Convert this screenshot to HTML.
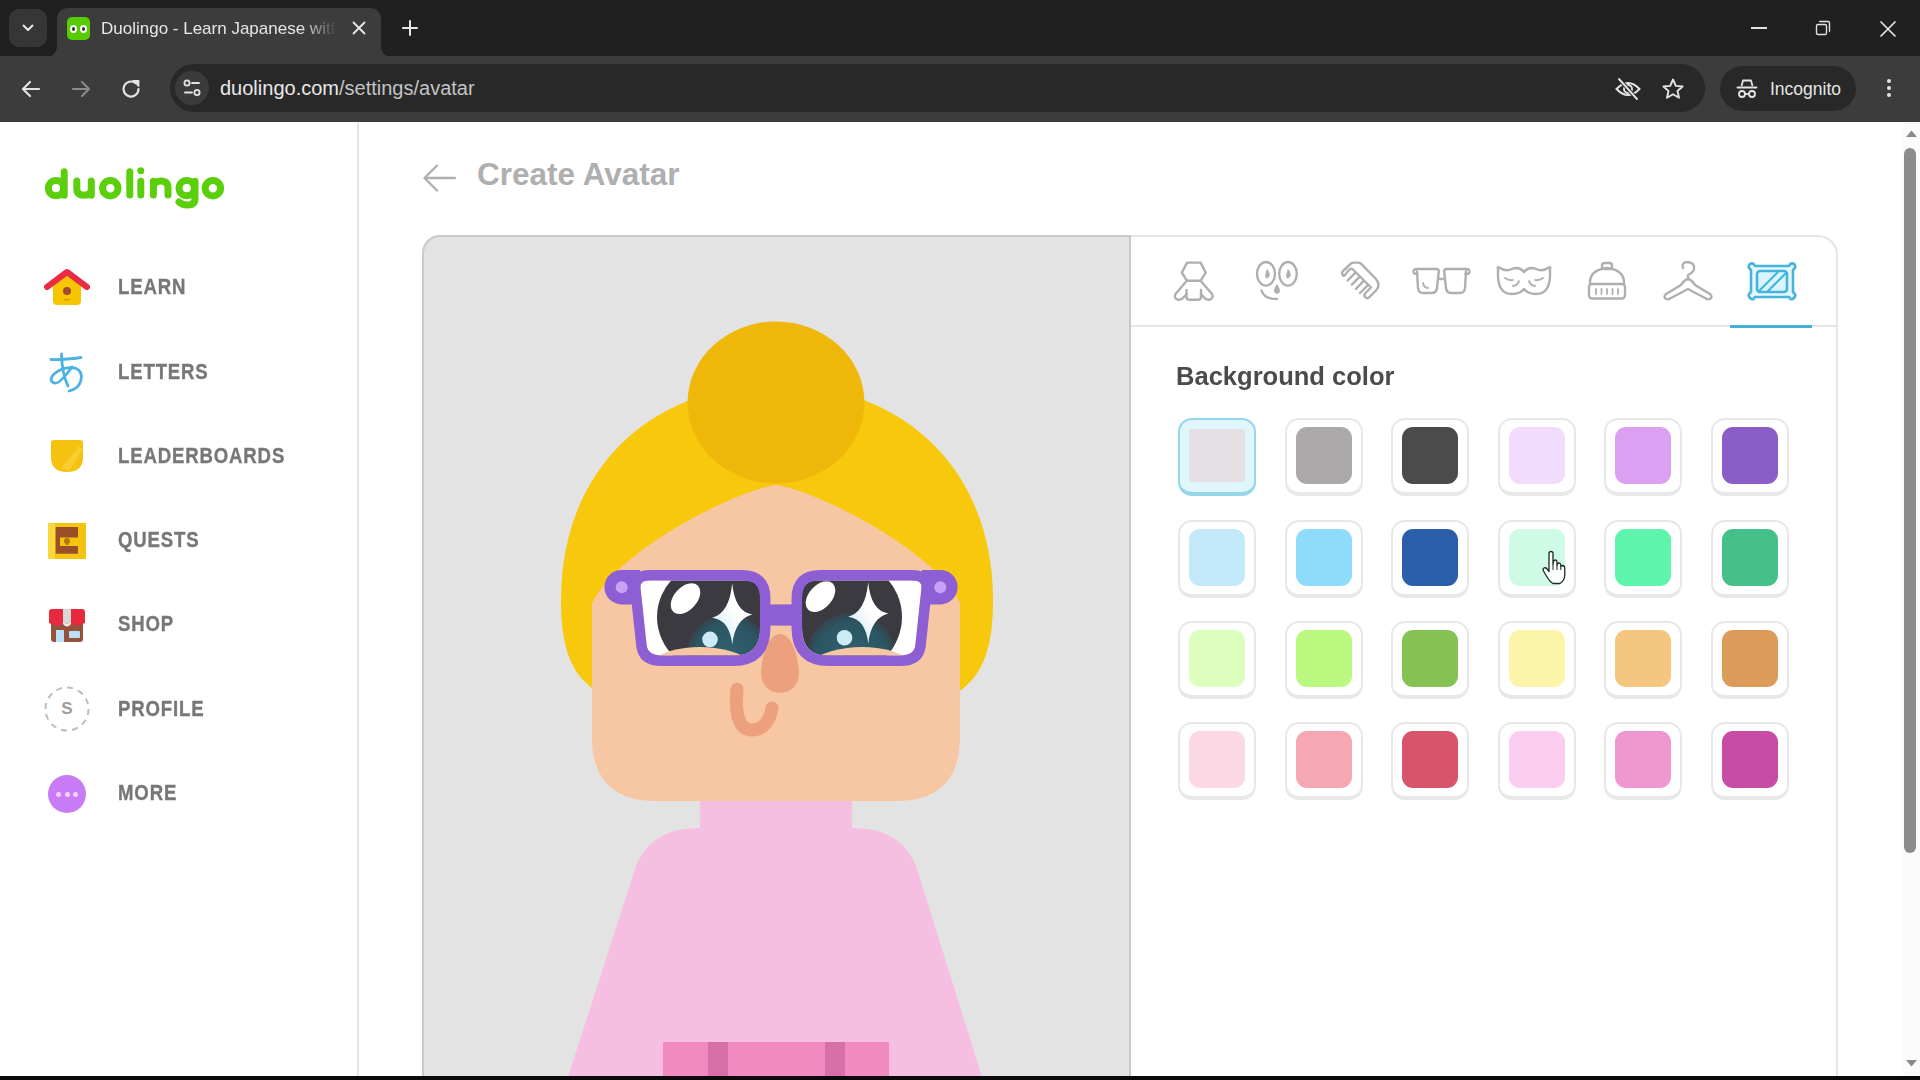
<!DOCTYPE html>
<html><head><meta charset="utf-8">
<style>
*{margin:0;padding:0;box-sizing:border-box}
html,body{width:1920px;height:1080px;overflow:hidden;background:#fff;font-family:"Liberation Sans",sans-serif;position:relative}
.abs{position:absolute}
.nav{position:absolute;left:118px;font-weight:700;font-size:22px;line-height:24px;color:#777;letter-spacing:1px;transform-origin:0 0;transform:scaleX(0.845);white-space:nowrap;-webkit-text-stroke:0.35px #777}
</style></head><body>
<!-- ===== Browser chrome ===== -->
<div class="abs" style="left:0;top:0;width:1920px;height:56px;background:#202020"></div>
<!-- tab dropdown btn -->
<div class="abs" style="left:9px;top:9px;width:38px;height:38px;background:#363636;border-radius:10px"></div>
<svg class="abs" style="left:20px;top:20px" width="16" height="16" viewBox="0 0 16 16"><path d="M3.5 5.5 L8 10 L12.5 5.5" fill="none" stroke="#e8e8e8" stroke-width="2" stroke-linecap="round" stroke-linejoin="round"/></svg>
<!-- active tab -->
<svg class="abs" style="left:45px;top:8px" width="348" height="49" viewBox="0 0 348 49"><path d="M0 49 Q12 49 12 37 L12 12 Q12 0 24 0 L324 0 Q336 0 336 12 L336 37 Q336 49 348 49 Z" fill="#3c3c3c"/></svg>
<!-- favicon -->
<div class="abs" style="left:67px;top:17px;width:23px;height:23px;background:#58cc02;border-radius:5px"></div>
<div class="abs" style="left:70px;top:25px;width:7px;height:8px;background:#fff;border-radius:50%"></div>
<div class="abs" style="left:80px;top:25px;width:7px;height:8px;background:#fff;border-radius:50%"></div>
<div class="abs" style="left:72px;top:27px;width:3px;height:4px;background:#2b3a1a;border-radius:50%"></div>
<div class="abs" style="left:82px;top:27px;width:3px;height:4px;background:#333;border-radius:50%"></div>
<div class="abs" style="left:101px;top:18px;width:236px;height:24px;overflow:hidden;white-space:nowrap;font-size:17px;color:#e6e6e6;line-height:22px;-webkit-mask-image:linear-gradient(90deg,#000 85%,transparent 100%)">Duolingo - Learn Japanese with</div>
<svg class="abs" style="left:351px;top:20px" width="16" height="16" viewBox="0 0 16 16"><path d="M2.5 2.5 L13.5 13.5 M13.5 2.5 L2.5 13.5" stroke="#e8e8e8" stroke-width="1.8" stroke-linecap="round"/></svg>
<svg class="abs" style="left:401px;top:19px" width="18" height="18" viewBox="0 0 18 18"><path d="M9 2 V16 M2 9 H16" stroke="#e8e8e8" stroke-width="2" stroke-linecap="round"/></svg>
<!-- window controls -->
<div class="abs" style="left:1751px;top:27px;width:16px;height:1.5px;background:#e0e0e0"></div>
<svg class="abs" style="left:1813px;top:18px" width="20" height="20" viewBox="0 0 20 20"><rect x="3.5" y="6.5" width="10" height="10" rx="1.5" fill="none" stroke="#e0e0e0" stroke-width="1.4"/><path d="M6.5 4 Q6.5 3.5 7 3.5 L15 3.5 Q16.5 3.5 16.5 5 L16.5 13 Q16.5 13.5 16 13.5" fill="none" stroke="#e0e0e0" stroke-width="1.4"/></svg>
<svg class="abs" style="left:1878px;top:19px" width="20" height="20" viewBox="0 0 20 20"><path d="M2.5 2.5 L17.5 17.5 M17.5 2.5 L2.5 17.5" stroke="#e8e8e8" stroke-width="1.6"/></svg>
<!-- toolbar -->
<div class="abs" style="left:0;top:56px;width:1920px;height:66px;background:#3c3c3c"></div>
<svg class="abs" style="left:19px;top:77px" width="24" height="24" viewBox="0 0 24 24"><path d="M20 12 H4.5 M11 5 L4 12 L11 19" fill="none" stroke="#e3e3e3" stroke-width="2.2" stroke-linecap="round" stroke-linejoin="round"/></svg>
<svg class="abs" style="left:69px;top:77px" width="24" height="24" viewBox="0 0 24 24"><path d="M4 12 H19.5 M13 5 L20 12 L13 19" fill="none" stroke="#8a8a8a" stroke-width="2.2" stroke-linecap="round" stroke-linejoin="round"/></svg>
<svg class="abs" style="left:119px;top:77px" width="24" height="24" viewBox="0 0 24 24"><path d="M19.5 12 A7.5 7.5 0 1 1 16.6 6.1" fill="none" stroke="#e3e3e3" stroke-width="2.2" stroke-linecap="round"/><path d="M14 3.5 L19.8 3.5 L19.8 9.3 Z" fill="#e3e3e3" stroke="#e3e3e3" stroke-width="1.2" stroke-linejoin="round"/></svg>
<div class="abs" style="left:170px;top:64px;width:1535px;height:48px;background:#282828;border-radius:24px"></div>
<div class="abs" style="left:175px;top:71px;width:34px;height:34px;background:#3b3b3b;border-radius:50%"></div>
<svg class="abs" style="left:181px;top:77px" width="22" height="22" viewBox="0 0 22 22"><circle cx="6" cy="6" r="2.6" fill="none" stroke="#e3e3e3" stroke-width="1.8"/><path d="M11 6 H18" stroke="#e3e3e3" stroke-width="1.8" stroke-linecap="round"/><circle cx="16" cy="15.5" r="2.6" fill="none" stroke="#e3e3e3" stroke-width="1.8"/><path d="M4 15.5 H11" stroke="#e3e3e3" stroke-width="1.8" stroke-linecap="round"/></svg>
<div class="abs" style="left:220px;top:76px;font-size:20px;line-height:24px;color:#e8e8e8;white-space:nowrap">duolingo.com<span style="color:#c4c4c4">/settings/avatar</span></div>
<svg class="abs" style="left:1614px;top:76px" width="28" height="26" viewBox="0 0 28 26"><path d="M2.5 13 Q14 1 25.5 13 Q14 25 2.5 13 Z" fill="none" stroke="#e3e3e3" stroke-width="1.9"/><circle cx="14" cy="13" r="4" fill="none" stroke="#e3e3e3" stroke-width="1.9"/><path d="M5 3 L23 23" stroke="#282828" stroke-width="4"/><path d="M5 3 L23 23" stroke="#e3e3e3" stroke-width="1.9" stroke-linecap="round"/></svg>
<svg class="abs" style="left:1661px;top:77px" width="24" height="24" viewBox="0 0 24 24"><path d="M12 2.5 L14.8 8.9 L21.6 9.5 L16.5 14 L18 20.8 L12 17.2 L6 20.8 L7.5 14 L2.4 9.5 L9.2 8.9 Z" fill="none" stroke="#e3e3e3" stroke-width="1.9" stroke-linejoin="round"/></svg>
<div class="abs" style="left:1720px;top:66px;width:136px;height:45px;background:#282828;border-radius:23px"></div>
<svg class="abs" style="left:1736px;top:78px" width="22" height="22" viewBox="0 0 22 22"><path d="M5.5 8 L7 2.5 L15 2.5 L16.5 8" fill="none" stroke="#e3e3e3" stroke-width="1.8" stroke-linejoin="round"/><path d="M1.5 9.5 H20.5" stroke="#e3e3e3" stroke-width="2" stroke-linecap="round"/><circle cx="6" cy="16" r="3" fill="none" stroke="#e3e3e3" stroke-width="1.8"/><circle cx="16" cy="16" r="3" fill="none" stroke="#e3e3e3" stroke-width="1.8"/><path d="M9 16 H13" stroke="#e3e3e3" stroke-width="1.8"/></svg>
<div class="abs" style="left:1770px;top:78px;font-size:17.5px;line-height:22px;color:#e6e6e6;white-space:nowrap">Incognito</div>
<div class="abs" style="left:1887px;top:79px;width:4px;height:4px;background:#e3e3e3;border-radius:50%"></div>
<div class="abs" style="left:1887px;top:86px;width:4px;height:4px;background:#e3e3e3;border-radius:50%"></div>
<div class="abs" style="left:1887px;top:93px;width:4px;height:4px;background:#e3e3e3;border-radius:50%"></div>

<!-- ===== Sidebar ===== -->
<div class="abs" style="left:357px;top:122px;width:2px;height:958px;background:#e5e5e5"></div>
<svg class="abs" style="left:35px;top:155px" width="200" height="65" viewBox="35 155 200 65" fill="none" stroke="#5ccf0c" stroke-width="7" stroke-linecap="round" stroke-linejoin="round">
  <circle cx="56" cy="188.2" r="7.6"/><path d="M64.2 171.8 L64.2 195.2"/>
  <path d="M76.8 181 L76.8 189 Q76.8 195.3 84 195.3 Q91.3 195.3 91.3 189 L91.3 181 M91.3 186 L91.3 195.2"/>
  <circle cx="110.3" cy="188.2" r="7.7"/>
  <path d="M129.8 171.8 L129.8 195"/>
  <path d="M140.8 181.2 L140.8 195"/><circle cx="140.8" cy="170.8" r="3.5" fill="#5ccf0c" stroke="none"/>
  <path d="M153.4 195 L153.4 181.2 M153.4 187.5 Q153.4 181 160.6 181 Q168 181 168 187.5 L168 195"/>
  <circle cx="186.7" cy="188.2" r="7.6"/><path d="M195 181.2 L195 198.5 Q195 205 187.5 205 Q182 205 179 202"/>
  <circle cx="212.9" cy="188.2" r="7.7"/>
</svg>
<!-- learn house -->
<svg class="abs" style="left:44px;top:268px" width="46" height="40" viewBox="0 0 46 40"><path d="M9 18 L23 7 L37 18 L37 33 Q37 37 33 37 L13 37 Q9 37 9 33 Z" fill="#f8c600"/><path d="M3 19 L23 4 L43 19" fill="none" stroke="#ea2b44" stroke-width="6" stroke-linecap="round" stroke-linejoin="round"/><circle cx="23" cy="23" r="4" fill="#a5492b"/><rect x="20" y="31" width="6" height="1.6" rx="0.8" fill="#d4a000"/></svg>
<div class="nav" style="top:275px">LEARN</div>
<!-- letters あ -->
<svg class="abs" style="left:46px;top:352px" width="40" height="44" viewBox="0 0 40 44"><path d="M5 7.5 Q18 8 35 5.5" fill="none" stroke="#4ab3e3" stroke-width="2.8" stroke-linecap="round"/><path d="M15.5 2 Q16 22 22 34" fill="none" stroke="#4ab3e3" stroke-width="2.8" stroke-linecap="round"/><path d="M26 15 Q13 33 8 31 Q2 28 8 22 Q17 14 29 16 Q37 19 35 28 Q33 37 23 39" fill="none" stroke="#4ab3e3" stroke-width="2.8" stroke-linecap="round" stroke-linejoin="round"/></svg>
<div class="nav" style="top:360px">LETTERS</div>
<!-- leaderboard shield -->
<svg class="abs" style="left:49px;top:438px" width="36" height="36" viewBox="0 0 36 36"><path d="M2 5 Q2 2 5 2 L31 2 Q34 2 34 5 L34 19 Q34 34 18 34 Q2 34 2 19 Z" fill="#f5c20f"/><path d="M12 30 L30 8 L33 12 L20 33 Z" fill="#fad84a" opacity="0.55"/></svg>
<div class="nav" style="top:444px">LEADERBOARDS</div>
<!-- quests chest -->
<svg class="abs" style="left:47px;top:521px" width="40" height="40" viewBox="0 0 40 40"><rect x="1" y="2" width="38" height="36" fill="#f5c60f"/><rect x="1" y="2" width="7" height="36" fill="#f9d83e"/><rect x="32" y="2" width="7" height="36" fill="#f3c20a"/><path d="M8.6 6 L31 6 L31 16.5 L13 16.5 L13 25 L31 25 L31 32.8 L8.6 32.8 Z" fill="#9b4f28"/><circle cx="20" cy="20" r="3" fill="#b4760a"/><rect x="18.7" y="20" width="2.6" height="4" fill="#b4760a"/></svg>
<div class="nav" style="top:528px">QUESTS</div>
<!-- shop -->
<svg class="abs" style="left:47px;top:607px" width="40" height="38" viewBox="0 0 40 38"><path d="M4 14 L36 14 L36 32 Q36 35 33 35 L7 35 Q4 35 4 32 Z" fill="#94523f"/><rect x="9" y="23" width="8" height="12" fill="#b9e0f7"/><rect x="22" y="24" width="11" height="7" rx="1" fill="#b9e0f7"/><path d="M2 5 Q2 2 5 2 L16 2 L16 17 Q9 20 2 16 Z" fill="#e8283d"/><path d="M24 2 L35 2 Q38 2 38 5 L38 16 Q31 20 24 17 Z" fill="#e8283d"/><path d="M16 2 L24 2 L24 14 Q20 20 16 14 Z" fill="#d9d9d9"/><path d="M16 14 Q20 20 24 14 L24 17 Q20 22 16 17 Z" fill="#f5efe8"/></svg>
<div class="nav" style="top:612px">SHOP</div>
<!-- profile -->
<svg class="abs" style="left:44px;top:686px" width="46" height="46" viewBox="0 0 46 46"><circle cx="23" cy="23" r="21.5" fill="none" stroke="#bdbdbd" stroke-width="2" stroke-dasharray="6 5.2"/></svg>
<div class="abs" style="left:44px;top:698px;width:46px;text-align:center;font-size:17px;line-height:22px;color:#9c9c9c;font-weight:700">S</div>
<div class="nav" style="top:697px">PROFILE</div>
<!-- more -->
<div class="abs" style="left:48px;top:775px;width:38px;height:38px;background:#c97bf5;border-radius:50%"></div>
<div class="abs" style="left:56px;top:792px;width:5px;height:5px;background:#f5d0ff;border-radius:50%"></div>
<div class="abs" style="left:64.5px;top:792px;width:5px;height:5px;background:#f5d0ff;border-radius:50%"></div>
<div class="abs" style="left:73px;top:792px;width:5px;height:5px;background:#f5d0ff;border-radius:50%"></div>
<div class="nav" style="top:781px">MORE</div>

<!-- ===== Header ===== -->
<svg class="abs" style="left:420px;top:160px" width="40" height="36" viewBox="0 0 40 36"><path d="M35 18 H5.5 M17 5.5 L4.5 18 L17 30.5" fill="none" stroke="#afafaf" stroke-width="2.3" stroke-linecap="round" stroke-linejoin="round"/></svg>
<div class="abs" style="left:477px;top:155px;font-size:31.5px;line-height:38px;font-weight:700;color:#afafaf;white-space:nowrap">Create Avatar</div>
<!-- ===== Card ===== -->
<div class="abs" style="left:1129px;top:235px;width:709px;height:860px;border:2px solid #e5e5e5;border-bottom:none;border-radius:0 20px 0 0;background:#fff"></div>
<div class="abs" style="left:1130px;top:325px;width:706px;height:2px;background:#e5e5e5"></div>
<div class="abs" style="left:1730px;top:325px;width:82px;height:3px;background:#45afd9"></div>
<div class="abs" style="left:422px;top:235px;width:709px;height:860px;border:2px solid #c9c9c9;border-bottom:none;border-radius:18px 0 0 0;background:#e3e3e3"></div>
<!-- avatar -->
<svg class="abs" style="left:424px;top:237px" width="706" height="840" viewBox="424 237 706 840">
  <defs>
    <radialGradient id="teal" cx="0.5" cy="0.5" r="0.5">
      <stop offset="0" stop-color="#2f6170"/>
      <stop offset="0.8" stop-color="#2c5563"/>
      <stop offset="1" stop-color="#34434c"/>
    </radialGradient>
    <linearGradient id="spark" x1="0" y1="1" x2="1" y2="0">
      <stop offset="0" stop-color="#c6e6f3"/>
      <stop offset="0.55" stop-color="#ffffff"/>
    </linearGradient>
    <clipPath id="lensL"><path d="M650 580.5 L745 580.5 Q760 580.5 760 595 L760 628 Q760 655.6 733 655.6 L662 655.6 Q648 655.6 646.5 645 L640.5 588 Q640 580.5 650 580.5 Z"/></clipPath>
    <clipPath id="lensR"><path d="M912 580.5 L817 580.5 Q802 580.5 802 595 L802 628 Q802 655.6 829 655.6 L900 655.6 Q914 655.6 915.5 645 L921.5 588 Q922 580.5 912 580.5 Z"/></clipPath>
    <clipPath id="irisL"><ellipse cx="720" cy="617" rx="63" ry="58"/></clipPath>
    <clipPath id="irisR"><ellipse cx="842" cy="617" rx="60" ry="58"/></clipPath>
  </defs>
  <!-- shirt -->
  <path d="M700 828 L852 828 Q905 828 918 872 L982 1077 L568 1077 L634 872 Q647 828 700 828 Z" fill="#f6bfe1"/>
  <rect x="663" y="1042" width="226" height="40" fill="#f08ac1"/>
  <rect x="708" y="1042" width="20" height="40" fill="#d86fa8"/>
  <rect x="825" y="1042" width="20" height="40" fill="#d86fa8"/>
  <!-- neck -->
  <rect x="700" y="790" width="152" height="40" fill="#f6bfe1"/>
  <!-- hair -->
  <path d="M598 692 C572 676 561 650 561 600 C561 470 650 385 777 385 C904 385 993 470 993 600 C993 650 982 676 958 692 Z" fill="#f8c80c"/>
  <!-- bun -->
  <ellipse cx="776" cy="402.5" rx="88.4" ry="81" fill="#f0b70b"/>
  <!-- face -->
  <path d="M592 604 C614 552 738 489 776 485 C814 489 938 552 960 604 L960 737 Q960 801 896 801 L656 801 Q592 801 592 737 Z" fill="#f7c6a2"/>
  <!-- nose -->
  <path d="M780 634 C792 634 799 658 799 674 A19 19 0 0 1 761 674 C761 658 768 634 780 634 Z" fill="#eda07e"/>
  <!-- mouth -->
  <path d="M737 689 C735 712 738 730 752 730 C764 730 770 720 772 708" fill="none" stroke="#eda07e" stroke-width="13" stroke-linecap="round"/>
  <!-- left eye -->
  <g clip-path="url(#lensL)">
    <rect x="630" y="570" width="140" height="95" fill="#ffffff"/>
    <ellipse cx="720" cy="617" rx="63" ry="58" fill="#3c3a41"/>
    <g clip-path="url(#irisL)"><circle cx="728" cy="655" r="41" fill="url(#teal)"/></g>
    <path d="M655 657 Q662 654 670 651 Q700 643 730 651 Q740 654 748 658 L748 670 L655 670 Z" fill="#f7c6a2"/>
    <ellipse cx="685.5" cy="598.6" rx="18" ry="11.5" transform="rotate(-48 685.5 598.6)" fill="#ffffff"/>
    <path d="M732.2 583.3 Q735 612 752.2 614.4 Q735 619 732.2 644.4 Q729.5 620 712.2 617.8 Q729.5 613 732.2 583.3 Z" fill="url(#spark)"/>
    <circle cx="710" cy="639.4" r="7.8" fill="#cdebf7"/>
  </g>
  <!-- right eye -->
  <g clip-path="url(#lensR)">
    <rect x="792" y="570" width="140" height="95" fill="#ffffff"/>
    <ellipse cx="842" cy="617" rx="60" ry="58" fill="#3c3a41"/>
    <g clip-path="url(#irisR)"><circle cx="851" cy="658" r="45" fill="url(#teal)"/></g>
    <path d="M907 657 Q900 654 892 651 Q862 643 832 651 Q822 654 814 658 L814 670 L907 670 Z" fill="#f7c6a2"/>
    <ellipse cx="820.5" cy="596.6" rx="18" ry="11.5" transform="rotate(-48 820.5 596.6)" fill="#ffffff"/>
    <path d="M868.2 582.3 Q871 611 888.2 613.4 Q871 618 868.2 643.4 Q865.5 619 848.2 616.8 Q865.5 612 868.2 582.3 Z" fill="url(#spark)"/>
    <circle cx="844.5" cy="637.8" r="7.8" fill="#cdebf7"/>
  </g>
  <!-- glasses frame -->
  <g fill="none" stroke="#8e5fd4" stroke-width="10.5" stroke-linejoin="round">
    <path d="M650 575.3 L742 575.3 Q765.2 575.3 765.2 598 L765.2 628 Q765.2 660.8 733 660.8 L662 660.8 Q643.5 660.8 641.5 646 L635.3 588 Q634.5 575.3 650 575.3 Z"/>
    <path d="M912 575.3 L820 575.3 Q796.8 575.3 796.8 598 L796.8 628 Q796.8 660.8 829 660.8 L900 660.8 Q918.5 660.8 920.5 646 L926.7 588 Q927.5 575.3 912 575.3 Z"/>
  </g>
  <path d="M621.6 570 L640 570 L640 604.4 L621.6 604.4 A17.2 17.2 0 0 1 621.6 570 Z" fill="#8e5fd4"/>
  <path d="M940.4 570 L922 570 L922 604.4 L940.4 604.4 A17.2 17.2 0 0 0 940.4 570 Z" fill="#8e5fd4"/>
  <rect x="765" y="604.4" width="32" height="21.2" fill="#8e5fd4"/>
  <circle cx="621.7" cy="587.2" r="6" fill="#c9a2f7"/>
  <circle cx="940.3" cy="587.2" r="6" fill="#c9a2f7"/>
</svg>

<!-- ===== Tab icons ===== -->
<svg class="abs" style="left:1160px;top:250px" width="660" height="60" viewBox="1160 250 660 60" fill="none" stroke="#afafaf" stroke-width="2.4" stroke-linecap="round" stroke-linejoin="round">
  <!-- body -->
  <path d="M1187 262.6 L1200.6 262.6 L1205.7 272.6 L1200.6 280.7 L1186.8 280.7 L1181.9 272.6 Z"/>
  <path d="M1186.8 280.7 L1175.5 294 Q1173.5 298 1177.5 299.5 Q1181 300.5 1183.5 297.5 L1186.5 294"/>
  <path d="M1200.6 280.7 L1212 294 Q1214 298 1210 299.5 Q1206.5 300.5 1204 297.5 L1201 294"/>
  <path d="M1186.5 290 L1186.5 297 Q1186.5 299.7 1189.5 299.7 L1198 299.7 Q1201 299.7 1201 297 L1201 290"/>
  <!-- face -->
  <ellipse cx="1266" cy="273.8" rx="9" ry="11.8"/>
  <ellipse cx="1288" cy="273.8" rx="8.8" ry="11.8"/>
  <path d="M1267 270 Q1265 275 1266 278 Q1270 278 1269 273 Z" fill="#afafaf" stroke-width="1"/>
  <path d="M1288 270 Q1286 275 1287 278 Q1291 278 1290 273 Z" fill="#afafaf" stroke-width="1"/>
  <path d="M1277 285 Q1274 290 1275 292 Q1277 294 1279 292 Q1280 290 1277 285 Z" fill="#afafaf" stroke-width="1.4"/>
  <path d="M1261.5 290.5 Q1264 299 1277 299"/>
  <!-- comb -->
  <path d="M1343 275.5 Q1341 273 1343 271 L1351 263.5 Q1352 262.6 1354 262.6 L1358 262.6 Q1360 262.6 1361 263.6 L1376 279 Q1378.5 282 1378.5 285 Q1378.5 288 1376 290.5 L1369 297.5 Q1367 299 1365 297 Q1363.5 295 1365.5 293 L1371 287.5 L1353 269.5 Q1351 268 1349 270 L1346 273.5 Q1344.5 276.5 1343 275.5 Z"/>
  <path d="M1355.5 272.6 L1347.6 280.5 M1359.6 276.8 L1351.8 284.6 M1363.8 280.9 L1355.9 288.8 M1368 285.1 L1360 293"/>
  <!-- glasses -->
  <path d="M1418 269 L1436.5 269 Q1439 269 1438.8 271.5 L1437 288 Q1436.5 293 1431.5 293 L1423.5 293 Q1418.5 293 1418 288 L1417 271.5"/>
  <path d="M1465 269 L1446.5 269 Q1444 269 1444.2 271.5 L1446 288 Q1446.5 293 1451.5 293 L1459.5 293 Q1464.5 293 1465 288 L1466 271.5"/>
  <path d="M1417 269 Q1413 269 1413.5 272 Q1414 274.5 1417.5 274 M1466 269 Q1470 269 1469.5 272 Q1469 274.5 1465.5 274"/>
  <path d="M1438.5 279 L1444.5 279"/>
  <path d="M1423 283 Q1424 288 1428 288" stroke-width="1.8"/>
  <!-- mask -->
  <path d="M1498 269 Q1497 266 1500 268 Q1506 272 1512 269 Q1519 266 1524 272 Q1529 266 1536 269 Q1542 272 1548 268 Q1551 266 1550 269 L1550 277 Q1549 294 1536 294 Q1528 294 1524 289 Q1520 294 1512 294 Q1499 294 1498 277 Z"/>
  <path d="M1505 278 Q1509 281 1513 280 M1535 280 Q1539 281 1543 278 M1513 286 Q1518 285 1519 281 M1529 281 Q1530 285 1535 286" stroke-width="1.8"/>
  <!-- hat -->
  <path d="M1590 284 Q1589 270 1607 268 Q1625 270 1624 284"/>
  <rect x="1602" y="263" width="10" height="6" rx="2.5"/>
  <rect x="1589" y="284" width="36" height="14.5" rx="3"/>
  <path d="M1596 289 L1596 294 M1601.5 289 L1601.5 294 M1607 289 L1607 294 M1612.5 289 L1612.5 294 M1618 289 L1618 294" stroke-width="1.8"/>
  <!-- hanger -->
  <path d="M1683 268 Q1681 262 1688 262 Q1695 263 1694 269 Q1693 273 1688 275 L1688 279"/>
  <path d="M1688 279 Q1684 280 1681 285 L1666 294 Q1663 297 1666 299 Q1668 300 1671 298 L1688 289 L1705 298 Q1708 300 1710 299 Q1713 297 1710 294 L1695 285 Q1692 280 1688 279 Z"/>
  <!-- frame (active) -->
  <g stroke="#45b3dd" stroke-width="2.6">
    <path d="M1755 266 L1789 266 Q1791 262 1794 264 Q1797 267 1793 270 L1793 292 Q1797 295 1794 298 Q1791 301 1789 297 L1755 297 Q1753 301 1750 298 Q1747 295 1751 292 L1751 270 Q1747 267 1750 264 Q1753 262 1755 266 Z" fill="#e6f7ff"/>
    <rect x="1757" y="271" width="30" height="21" rx="3" fill="#d7f5ff"/>
    <path d="M1759 291 L1778 272 M1768 291 L1786 273" stroke-width="2"/>
  </g>
</svg>
<!-- Background color -->
<div class="abs" style="left:1176px;top:360px;font-size:26px;line-height:32px;font-weight:700;color:#4b4b4b;white-space:nowrap;transform-origin:0 0;transform:scaleX(0.982)">Background color</div>
<!-- swatches -->
<div class="abs" style="left:1178px;top:418px;width:78px;height:78px;background:#e0f5fc;border:2px solid #94d6ea;border-bottom-width:4px;border-radius:14px"></div>
<div class="abs" style="left:1189px;top:429px;width:56px;height:53px;background:#e5e0e4;border-radius:3px"></div>
<div class="abs" style="left:1285px;top:418px;width:78px;height:78px;background:#fff;border:2px solid #e8e8e8;border-bottom-width:4px;border-radius:14px"></div>
<div class="abs" style="left:1296px;top:427px;width:56px;height:57px;background:#aba9a9;border-radius:11px"></div>
<div class="abs" style="left:1391px;top:418px;width:78px;height:78px;background:#fff;border:2px solid #e8e8e8;border-bottom-width:4px;border-radius:14px"></div>
<div class="abs" style="left:1402px;top:427px;width:56px;height:57px;background:#4b4b4b;border-radius:11px"></div>
<div class="abs" style="left:1498px;top:418px;width:78px;height:78px;background:#fff;border:2px solid #e8e8e8;border-bottom-width:4px;border-radius:14px"></div>
<div class="abs" style="left:1509px;top:427px;width:56px;height:57px;background:#f2dcfd;border-radius:11px"></div>
<div class="abs" style="left:1604px;top:418px;width:78px;height:78px;background:#fff;border:2px solid #e8e8e8;border-bottom-width:4px;border-radius:14px"></div>
<div class="abs" style="left:1615px;top:427px;width:56px;height:57px;background:#dca0f2;border-radius:11px"></div>
<div class="abs" style="left:1711px;top:418px;width:78px;height:78px;background:#fff;border:2px solid #e8e8e8;border-bottom-width:4px;border-radius:14px"></div>
<div class="abs" style="left:1722px;top:427px;width:56px;height:57px;background:#8b5ec7;border-radius:11px"></div>
<div class="abs" style="left:1178px;top:520px;width:78px;height:78px;background:#fff;border:2px solid #e8e8e8;border-bottom-width:4px;border-radius:14px"></div>
<div class="abs" style="left:1189px;top:529px;width:56px;height:57px;background:#c4e9fb;border-radius:11px"></div>
<div class="abs" style="left:1285px;top:520px;width:78px;height:78px;background:#fff;border:2px solid #e8e8e8;border-bottom-width:4px;border-radius:14px"></div>
<div class="abs" style="left:1296px;top:529px;width:56px;height:57px;background:#8edbfb;border-radius:11px"></div>
<div class="abs" style="left:1391px;top:520px;width:78px;height:78px;background:#fff;border:2px solid #e8e8e8;border-bottom-width:4px;border-radius:14px"></div>
<div class="abs" style="left:1402px;top:529px;width:56px;height:57px;background:#2b5ea8;border-radius:11px"></div>
<div class="abs" style="left:1498px;top:520px;width:78px;height:78px;background:#fff;border:2px solid #e8e8e8;border-bottom-width:4px;border-radius:14px"></div>
<div class="abs" style="left:1509px;top:529px;width:56px;height:57px;background:#cffbe6;border-radius:11px"></div>
<div class="abs" style="left:1604px;top:520px;width:78px;height:78px;background:#fff;border:2px solid #e8e8e8;border-bottom-width:4px;border-radius:14px"></div>
<div class="abs" style="left:1615px;top:529px;width:56px;height:57px;background:#5ff4ab;border-radius:11px"></div>
<div class="abs" style="left:1711px;top:520px;width:78px;height:78px;background:#fff;border:2px solid #e8e8e8;border-bottom-width:4px;border-radius:14px"></div>
<div class="abs" style="left:1722px;top:529px;width:56px;height:57px;background:#45c088;border-radius:11px"></div>
<div class="abs" style="left:1178px;top:621px;width:78px;height:78px;background:#fff;border:2px solid #e8e8e8;border-bottom-width:4px;border-radius:14px"></div>
<div class="abs" style="left:1189px;top:630px;width:56px;height:57px;background:#ddffbe;border-radius:11px"></div>
<div class="abs" style="left:1285px;top:621px;width:78px;height:78px;background:#fff;border:2px solid #e8e8e8;border-bottom-width:4px;border-radius:14px"></div>
<div class="abs" style="left:1296px;top:630px;width:56px;height:57px;background:#bbf87f;border-radius:11px"></div>
<div class="abs" style="left:1391px;top:621px;width:78px;height:78px;background:#fff;border:2px solid #e8e8e8;border-bottom-width:4px;border-radius:14px"></div>
<div class="abs" style="left:1402px;top:630px;width:56px;height:57px;background:#86c154;border-radius:11px"></div>
<div class="abs" style="left:1498px;top:621px;width:78px;height:78px;background:#fff;border:2px solid #e8e8e8;border-bottom-width:4px;border-radius:14px"></div>
<div class="abs" style="left:1509px;top:630px;width:56px;height:57px;background:#fcf4a8;border-radius:11px"></div>
<div class="abs" style="left:1604px;top:621px;width:78px;height:78px;background:#fff;border:2px solid #e8e8e8;border-bottom-width:4px;border-radius:14px"></div>
<div class="abs" style="left:1615px;top:630px;width:56px;height:57px;background:#f4c680;border-radius:11px"></div>
<div class="abs" style="left:1711px;top:621px;width:78px;height:78px;background:#fff;border:2px solid #e8e8e8;border-bottom-width:4px;border-radius:14px"></div>
<div class="abs" style="left:1722px;top:630px;width:56px;height:57px;background:#dd9b59;border-radius:11px"></div>
<div class="abs" style="left:1178px;top:722px;width:78px;height:78px;background:#fff;border:2px solid #e8e8e8;border-bottom-width:4px;border-radius:14px"></div>
<div class="abs" style="left:1189px;top:731px;width:56px;height:57px;background:#fbd8e3;border-radius:11px"></div>
<div class="abs" style="left:1285px;top:722px;width:78px;height:78px;background:#fff;border:2px solid #e8e8e8;border-bottom-width:4px;border-radius:14px"></div>
<div class="abs" style="left:1296px;top:731px;width:56px;height:57px;background:#f5a8b3;border-radius:11px"></div>
<div class="abs" style="left:1391px;top:722px;width:78px;height:78px;background:#fff;border:2px solid #e8e8e8;border-bottom-width:4px;border-radius:14px"></div>
<div class="abs" style="left:1402px;top:731px;width:56px;height:57px;background:#d8546a;border-radius:11px"></div>
<div class="abs" style="left:1498px;top:722px;width:78px;height:78px;background:#fff;border:2px solid #e8e8e8;border-bottom-width:4px;border-radius:14px"></div>
<div class="abs" style="left:1509px;top:731px;width:56px;height:57px;background:#fbcdf0;border-radius:11px"></div>
<div class="abs" style="left:1604px;top:722px;width:78px;height:78px;background:#fff;border:2px solid #e8e8e8;border-bottom-width:4px;border-radius:14px"></div>
<div class="abs" style="left:1615px;top:731px;width:56px;height:57px;background:#f096d1;border-radius:11px"></div>
<div class="abs" style="left:1711px;top:722px;width:78px;height:78px;background:#fff;border:2px solid #e8e8e8;border-bottom-width:4px;border-radius:14px"></div>
<div class="abs" style="left:1722px;top:731px;width:56px;height:57px;background:#c84ba6;border-radius:11px"></div>

<!-- cursor -->
<svg class="abs" style="left:1540px;top:550px" width="30" height="36" viewBox="0 0 30 36"><path d="M9 3.5 Q9 1.5 11 1.5 Q13 1.5 13 3.5 L13 14 L13.5 11.5 Q14 10 15.5 10 Q17 10 17 12 L17 15 Q17.5 13 19 13 Q20.5 13 20.8 15 L20.8 16.5 Q21.5 15.5 23 15.5 Q24.8 16 24.8 18 L24.8 25 Q24.5 31 20 33.5 L13 33.5 Q10 32 7 27 L3.5 21 Q2.5 19 4 18 Q5.5 17.2 7 18.8 L9 21.5 Z" fill="#fff" stroke="#1b2a22" stroke-width="1.3" stroke-linejoin="round"/><path d="M13 14 L13 20 M17 15 L17 20 M20.8 16.5 L20.8 20" stroke="#1b2a22" stroke-width="1"/></svg>
<!-- scrollbar -->
<div class="abs" style="left:1903px;top:122px;width:17px;height:955px;background:#fbfbfb"></div>
<svg class="abs" style="left:1903px;top:127px" width="17" height="12" viewBox="0 0 17 12"><path d="M3 10 L8.5 3.5 L14 10 Z" fill="#8a8a8a"/></svg>
<div class="abs" style="left:1904px;top:148px;width:12px;height:705px;background:#8c8c8c;border-radius:6px"></div>
<svg class="abs" style="left:1903px;top:1058px" width="17" height="12" viewBox="0 0 17 12"><path d="M3 2 L8.5 8.5 L14 2 Z" fill="#8a8a8a"/></svg>
<!-- bottom strip -->
<div class="abs" style="left:0;top:1076px;width:1920px;height:4px;background:#0a0a0a"></div>

</body></html>
